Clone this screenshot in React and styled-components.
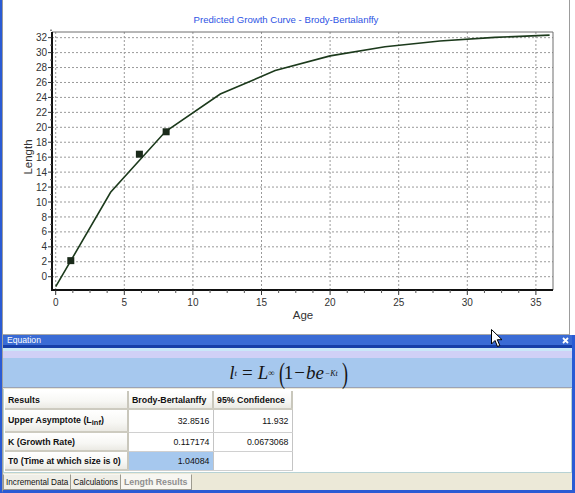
import React from "react";
import styled, { createGlobalStyle } from "styled-components";

const GlobalStyle = createGlobalStyle`
  html, body {
    margin: 0;
    padding: 0;
    background: #fff;
    overflow: hidden;
  }
  body {
    font-family: "Liberation Sans", Arial, sans-serif;
  }
`;

const XP_BLUE = "#2a5bd4";

const Window = styled.div`
  position: relative;
  width: 575px;
  height: 493px;
  box-sizing: border-box;
  border-left: 2px solid ${XP_BLUE};
  display: flex;
  flex-direction: column;
  background: #fff;
`;

const ChartPane = styled.div`
  height: 334px;
  margin-right: 5px;
  border-left: 1px solid #9c9c9c;
  border-right: 1px solid #9c9c9c;
  border-bottom: 1px solid #a8a8a8;
  display: flex;
  flex-direction: column;
`;

const ChartTitle = styled.div`
  height: 28px;
  box-sizing: border-box;
  padding-top: 14px;
  line-height: 12px;
  text-align: center;
  font-size: 9.6px;
  color: #2f55e4;
`;

const Plot = styled.svg`
  display: block;
  font-family: "Liberation Sans", Arial, sans-serif;
  .tick {
    font-size: 10px;
    fill: #333;
  }
  .axis-title {
    font-size: 11.5px;
    fill: #333;
  }
`;

const Lower = styled.div`
  flex: 1;
  display: flex;
  flex-direction: column;
  border-left: 1px solid #a0a0a0;
  border-right: 3px solid ${XP_BLUE};
  border-bottom: 3px solid ${XP_BLUE};
  background: #ece9d8;
`;

const PanelHeader = styled.div`
  height: 10px;
  border-bottom: 3px solid #173fa8;
  background: #3a6bd5;
  display: flex;
  align-items: center;
  justify-content: space-between;
  padding: 0 3px 0 4px;
  color: #fff;
  font-size: 8.6px;
  line-height: 10px;
`;

const CloseButton = styled.svg`
  display: block;
`;

const EquationStrip = styled.div`
  height: 40px;
  box-sizing: border-box;
  padding-top: 10px;
  border-bottom: 1px solid #9ba3b6;
  background: linear-gradient(
    to bottom,
    #c9e7f8 0,
    #c9e7f8 3px,
    #d0d0f6 3px,
    #d0d0f6 10px,
    #a6c8ee 10px
  );
`;

const Formula = styled.div`
  height: 30px;
  display: flex;
  align-items: center;
  justify-content: center;
  padding-left: 4px;
  font-family: "Liberation Serif", "Times New Roman", serif;
  font-size: 19px;
  color: #151515;
  white-space: pre;
  i {
    font-style: italic;
  }
  sub {
    font-size: 9px;
    vertical-align: -5px;
    font-style: italic;
  }
  sup {
    font-size: 8px;
    vertical-align: 9px;
    font-style: italic;
    margin-left: 1px;
  }
`;

const Op = styled.span`
  margin: 0 ${(p) => p.$gap}px;
`;

const Paren = styled.span`
  display: inline-block;
  font-size: 30px;
  line-height: 30px;
  transform: scaleX(0.6);
  margin: ${(p) => (p.$close ? "0 0 0 2px" : "0 -3px 0 2px")};
`;

const GridArea = styled.div`
  flex: 1;
  margin-top: 1px;
  background: #fff;
  border: 1px solid #b7d2d4;
  border-top: none;
  padding: 2px 0 0 1px;
`;

const Table = styled.table`
  border-collapse: collapse;
  font-size: 8.8px;
  color: #111;
  table-layout: fixed;
  width: 288px;
  col:nth-child(1) {
    width: 123px;
  }
  col:nth-child(2) {
    width: 85px;
  }
  col:nth-child(3) {
    width: 79px;
  }
`;

const Row = styled.tr`
  height: ${(p) => p.$h}px;
`;

const HeadCell = styled.th`
  text-align: left;
  font-weight: bold;
  padding: 0 3px;
  white-space: nowrap;
  background: linear-gradient(to bottom, #ffffff 0%, #f7f7f4 60%, #ebeae4 100%);
  border-right: 2px solid #c9c7bc;
  border-bottom: 2px solid #cdcbc0;
  sub {
    font-size: 7.5px;
    vertical-align: -2px;
  }
`;

const ValueCell = styled.td`
  text-align: right;
  padding: 0 3px 0 0;
  white-space: nowrap;
  background: ${(p) => (p.$selected ? "#a6c8ee" : "#fff")};
  border-right: 1px solid #c4c4c4;
  border-bottom: 1px solid #d0d0d0;
`;

const TabBar = styled.div`
  height: 17px;
  display: flex;
  align-items: flex-end;
`;

const Tab = styled.div`
  height: 16px;
  box-sizing: border-box;
  padding: 0 ${(p) => (p.$active ? 3 : 2)}px;
  display: flex;
  align-items: center;
  font-size: ${(p) => (p.$active ? "8.8px" : "8.2px")};
  font-weight: ${(p) => (p.$active ? "bold" : "normal")};
  color: ${(p) => (p.$active ? "#8f8f8f" : "#111")};
  background: ${(p) => (p.$active ? "#f7f6f1" : "#efeee7")};
  border: 1px solid #9d9b90;
  border-top: 1px solid #f7f6f1;
  border-left: ${(p) => (p.$first ? "1px solid #9d9b90" : "none")};
  white-space: nowrap;
`;

const Cursor = styled.svg`
  position: absolute;
  left: 489px;
  top: 329px;
`;

// chart geometry, in page pixels
const X0 = 55.7;
const XS = 13.72;
const Y0 = 276.7;
const YS = 7.47;
const LEFT = 52;
const TOP = 32;
const RIGHT = 553;
const BOTTOM = 290;

const px = (age) => X0 + age * XS;
const py = (v) => Y0 - v * YS;

const curveAges = [0, 4, 8, 12, 16, 20, 24, 28, 32, 36];
const curve = curveAges.map((t) => {
  const v = t === 0 ? -1.34 : t === 4 ? 11.3 : 32.85 - 34.19 * Math.exp(-0.117 * t);
  return `${px(t).toFixed(1)},${py(v).toFixed(1)}`;
});

const observed = [
  [1.1, 2.15],
  [6.1, 16.4],
  [8.05, 19.4],
];

const yTicks = Array.from({ length: 17 }, (_, i) => i * 2);
const xTicks = [0, 5, 10, 15, 20, 25, 30, 35];
const xMinor = Array.from({ length: 29 }, (_, i) => i * 1.25).filter((a) => a % 5 !== 0);

function GrowthChart() {
  return (
    <Plot width="566" height="306" viewBox="3 28 566 306">
      {yTicks.map((v) => (
        <line
          key={"gy" + v}
          x1={LEFT}
          x2={RIGHT}
          y1={py(v)}
          y2={py(v)}
          stroke="#9a9a9a"
          strokeDasharray="2 2"
        />
      ))}
      {xTicks.map((a) => (
        <line
          key={"gx" + a}
          x1={px(a)}
          x2={px(a)}
          y1={TOP}
          y2={BOTTOM}
          stroke="#9a9a9a"
          strokeDasharray="2 2"
        />
      ))}
      <line x1={LEFT} x2={RIGHT} y1={TOP} y2={TOP} stroke="#6e6e6e" />
      <line x1={RIGHT} x2={RIGHT} y1={TOP} y2={BOTTOM} stroke="#6e6e6e" />
      <line x1={LEFT} x2={LEFT} y1={TOP} y2={BOTTOM + 1} stroke="#111" strokeWidth="2" />
      <line x1={LEFT - 1} x2={RIGHT} y1={BOTTOM} y2={BOTTOM} stroke="#111" strokeWidth="2" />

      {yTicks.map((v) => (
        <g key={"ty" + v}>
          <line x1={LEFT - 4} x2={LEFT} y1={py(v)} y2={py(v)} stroke="#333" />
          <line x1={LEFT - 2} x2={LEFT} y1={py(v + 1)} y2={py(v + 1)} stroke="#555" />
          <text className="tick" x={47} y={py(v) + 3.6} textAnchor="end">
            {v}
          </text>
        </g>
      ))}
      {xTicks.map((a) => (
        <g key={"tx" + a}>
          <line x1={px(a)} x2={px(a)} y1={BOTTOM} y2={BOTTOM + 5} stroke="#333" />
          <text className="tick" x={px(a)} y={305.5} textAnchor="middle">
            {a}
          </text>
        </g>
      ))}
      {xMinor.map((a) => (
        <line key={"mx" + a} x1={px(a)} x2={px(a)} y1={BOTTOM} y2={BOTTOM + 3} stroke="#555" />
      ))}

      <polyline points={curve.join(" ")} fill="none" stroke="#1c3a1c" strokeWidth="1.6" />
      {observed.map(([a, v]) => (
        <rect
          key={"p" + a}
          x={px(a) - 3.5}
          y={py(v) - 3.5}
          width="7"
          height="7"
          fill="#1a2a1a"
        />
      ))}

      <text className="axis-title" x={303} y={318.5} textAnchor="middle">
        Age
      </text>
      <text
        className="axis-title"
        x={0}
        y={0}
        textAnchor="middle"
        transform="translate(32 157) rotate(-90)"
      >
        Length
      </text>
    </Plot>
  );
}

const results = [
  { label: "Upper Asymptote (L", sub: "inf", tail: ")", est: "32.8516", ci: "11.932", h: 23 },
  { label: "K (Growth Rate)", est: "0.117174", ci: "0.0673068", h: 19 },
  { label: "T0 (Time at which size is 0)", est: "1.04084", ci: "", h: 19, selected: true },
];

export default function App() {
  return (
    <>
      <GlobalStyle />
      <Window>
        <ChartPane>
          <ChartTitle>Predicted Growth Curve - Brody-Bertalanffy</ChartTitle>
          <GrowthChart />
        </ChartPane>

        <Lower>
          <PanelHeader>
            <span>Equation</span>
            <CloseButton width="7" height="7" viewBox="0 0 7 7">
              <path d="M1 1 L6 6 M6 1 L1 6" stroke="#fff" strokeWidth="1.8" />
            </CloseButton>
          </PanelHeader>

          <EquationStrip>
            <Formula>
              <i>l</i>
              <sub>t</sub>
              <Op $gap={5}>=</Op>
              <i>L</i>
              <sub>∞</sub>
              <Paren>(</Paren>
              1<Op $gap={1}>−</Op>
              <i>be</i>
              <sup>−Kt</sup>
              <Paren $close>)</Paren>
            </Formula>
          </EquationStrip>

          <GridArea>
            <Table>
              <colgroup>
                <col />
                <col />
                <col />
              </colgroup>
              <tbody>
                <Row $h={18}>
                  <HeadCell>Results</HeadCell>
                  <HeadCell>Brody-Bertalanffy</HeadCell>
                  <HeadCell>95% Confidence</HeadCell>
                </Row>
                {results.map((r) => (
                  <Row key={r.label} $h={r.h}>
                    <HeadCell>
                      {r.label}
                      {r.sub && <sub>{r.sub}</sub>}
                      {r.tail}
                    </HeadCell>
                    <ValueCell $selected={r.selected}>{r.est}</ValueCell>
                    <ValueCell>{r.ci}</ValueCell>
                  </Row>
                ))}
              </tbody>
            </Table>
          </GridArea>

          <TabBar>
            <Tab $first>Incremental Data</Tab>
            <Tab>Calculations</Tab>
            <Tab $active>Length Results</Tab>
          </TabBar>
        </Lower>

        <Cursor width="12" height="19" viewBox="0 0 12 19">
          <path
            d="M0.5 0.5 L0.5 15 L4 11.5 L6.5 17.5 L8.8 16.5 L6.3 10.7 L11 10.7 Z"
            fill="#fff"
            stroke="#000"
            strokeWidth="1"
          />
        </Cursor>
      </Window>
    </>
  );
}
